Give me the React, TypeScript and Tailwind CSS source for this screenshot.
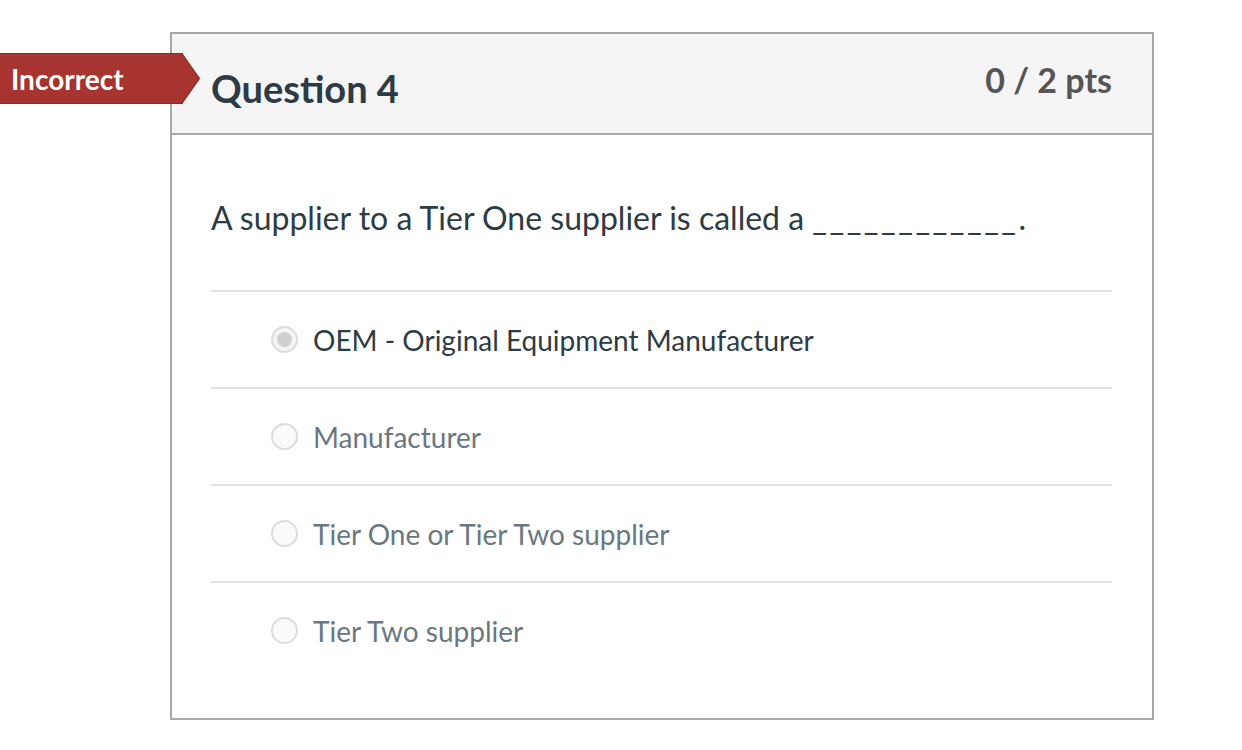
const answers = [
  { text: "OEM - Original Equipment Manufacturer", selected: true },
  { text: "Manufacturer", selected: false },
  { text: "Tier One or Tier Two supplier", selected: false },
  { text: "Tier Two supplier", selected: false },
];

function Radio({ selected }: { selected: boolean }) {
  return (
    <span
      className={
        "flex h-[27px] w-[27px] shrink-0 items-center justify-center rounded-full border-2 border-[#dcdcdc] " +
        (selected ? "bg-[#f4f4f4]" : "bg-[#fafafa]")
      }
    >
      {selected && <span className="h-[15px] w-[15px] rounded-full bg-[#cfcfcf]" />}
    </span>
  );
}

export default function App() {
  return (
    <div className="relative min-h-[750px] bg-white pl-[170px] pt-[32px] font-['Lato','Liberation_Sans',sans-serif]">
      {/* Incorrect badge */}
      <div className="absolute left-0 top-[53px] flex h-[51px] items-center">
        <div className="flex h-full w-[183px] items-center border-y border-[#8c2a24] bg-[#a7342e] pl-[11px] text-[28px] font-bold text-white">
          Incorrect
        </div>
        <svg width="18" height="51" viewBox="0 0 18 51" className="-ml-px block">
          <polygon points="0,0 0,51 18,25.5" fill="#a7342e" />
          <polyline points="0,0.5 17.5,25.5 0,50.5" fill="none" stroke="#8c2a24" strokeWidth="1" />
        </svg>
      </div>

      <div className="w-[984px] border-2 border-[#a8a8a8]">
        {/* Header */}
        <div className="flex h-[101px] justify-between border-b-2 border-[#a8a8a8] bg-[#f5f5f5] pl-[39px] pr-[40px]">
          <h2 className="pt-[30px] text-[38px] font-bold leading-[48px] text-[#2d3b45]">Question 4</h2>
          <div className="pt-[24px] text-[34px] font-bold leading-[44px] text-[#555555]">0 / 2 pts</div>
        </div>

        {/* Body */}
        <div className="pb-[40px] pl-[39px] pr-[40px]">
          <p className="flex h-[155px] items-center pt-[10px] text-[32px] text-[#2d3b45]">
            <span className="whitespace-pre">
              A supplier to a Tier One supplier is called a{" "}
              <span className="tracking-[2.5px]">____________</span>.
            </span>
          </p>
          <div>
            {answers.map((a) => (
              <div
                key={a.text}
                className="flex h-[97px] items-center gap-[15px] border-t-2 border-[#e2e2e2] pl-[60px]"
              >
                <Radio selected={a.selected} />
                <span className={"text-[28px] " + (a.selected ? "text-[#2d3b45]" : "text-[#6b7780]")}>
                  {a.text}
                </span>
              </div>
            ))}
          </div>
        </div>
      </div>
    </div>
  );
}
